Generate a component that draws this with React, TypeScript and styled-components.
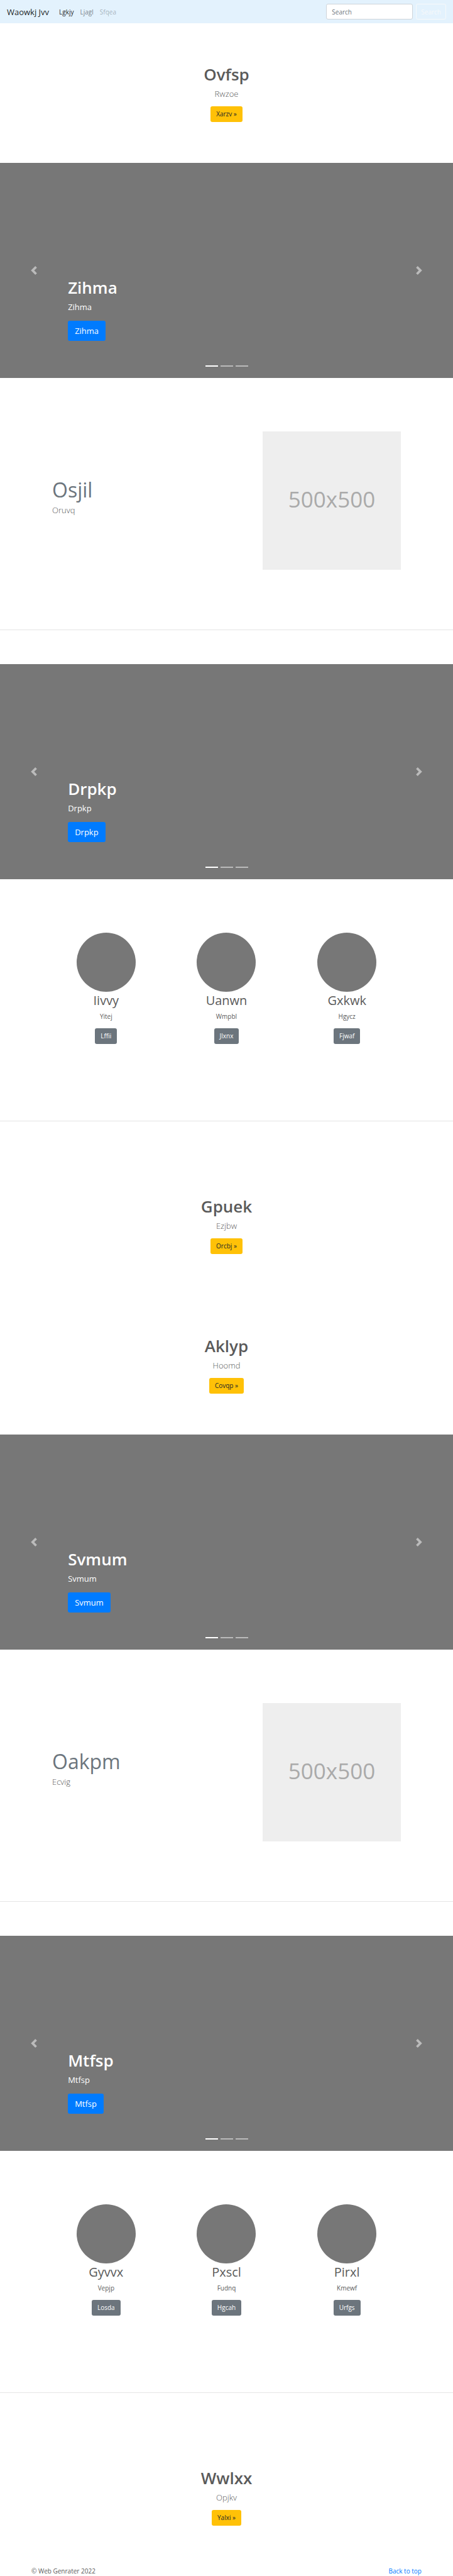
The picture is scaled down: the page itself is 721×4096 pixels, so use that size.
import React from 'react';
import styled, { createGlobalStyle } from 'styled-components';

const GlobalStyle = createGlobalStyle`
  *, *::before, *::after { box-sizing: border-box; }
  body {
    margin: 0;
    background: #fff;
    color: #5a5a5a;
    font-family: "Open Sans", "Noto Sans", sans-serif;
    font-size: 10px;
    line-height: 16px;
  }
  h1, h2, p, ul { margin: 0; padding: 0; }
  a { text-decoration: none; }
  button, input { font-family: inherit; }
`;

const Navbar = styled.nav`
  display: flex;
  align-items: center;
  height: 37px;
  padding: 0 11px;
  background: #e3f2fd;
`;

const Brand = styled.a`
  margin-right: 11px;
  color: rgba(0, 0, 0, 0.9);
  font-size: 13px;
  line-height: 20px;
`;

const NavList = styled.ul`
  display: flex;
  flex: 1;
  list-style: none;
`;

const NavLink = styled.a<{ $tone: number }>`
  display: block;
  padding: 0 5px;
  color: rgba(0, 0, 0, ${(p) => p.$tone});
`;

const SearchForm = styled.form`
  display: flex;
  gap: 5px;
`;

const SearchInput = styled.input`
  width: 138px;
  height: 25px;
  padding: 0 8px;
  border: 1px solid #ced4da;
  border-radius: 3px;
  background: #fff;
  color: #495057;
  font-size: 10px;
  &::placeholder { color: #6c757d; opacity: 1; }
`;

const SearchButton = styled.button`
  height: 25px;
  padding: 0 7px;
  border: 1px solid #f8f9fa;
  border-radius: 3px;
  background: transparent;
  color: #f8f9fa;
  font-size: 10px;
`;

const variants = {
  warning: { background: '#ffc107', color: '#212529' },
  secondary: { background: '#6c757d', color: '#fff' },
  primary: { background: '#007bff', color: '#fff' },
};

const LinkButton = styled.a<{ $variant: keyof typeof variants; $large?: boolean }>`
  display: inline-block;
  height: ${(p) => (p.$large ? 32 : 25)}px;
  padding: 0 ${(p) => (p.$large ? 11 : 9)}px;
  border-radius: 3px;
  background: ${(p) => variants[p.$variant].background};
  color: ${(p) => variants[p.$variant].color};
  font-size: ${(p) => (p.$large ? 13 : 10)}px;
  line-height: ${(p) => (p.$large ? 32 : 25)}px;
`;

const HeroSection = styled.section`
  display: flex;
  flex-direction: column;
  align-items: center;
  padding: 65px 16px;
`;

const Title = styled.h1`
  font-size: 26px;
  font-weight: 600;
  line-height: 32px;
`;

const HeroLead = styled.p`
  margin: 5px 0 10px;
  font-size: 13px;
  font-weight: 300;
  line-height: 20px;
`;

const CarouselSection = styled.section`
  position: relative;
  display: flex;
  flex-direction: column;
  align-items: flex-start;
  justify-content: flex-end;
  min-height: 342px;
  padding: 0 15% 59px;
  background: #777;
  color: #fff;
`;

const CaptionText = styled.p`
  margin: 5px 0 12px;
  font-size: 13px;
  line-height: 20px;
`;

const Control = styled.button<{ $side: 'left' | 'right' }>`
  position: absolute;
  top: 0;
  bottom: 0;
  ${(p) => p.$side}: 0;
  display: flex;
  align-items: center;
  justify-content: center;
  width: 15%;
  padding: 0;
  border: 0;
  background: none;
  color: #fff;
  opacity: 0.5;
`;

const Indicators = styled.div`
  position: absolute;
  right: 0;
  bottom: 18px;
  left: 0;
  display: flex;
  justify-content: center;
  gap: 4px;
`;

const Indicator = styled.button<{ $active?: boolean }>`
  width: 20px;
  height: 2px;
  padding: 0;
  border: 0;
  background: #fff;
  opacity: ${(p) => (p.$active ? 1 : 0.5)};
`;

const FeatureSection = styled.section`
  display: flex;
  align-items: center;
  justify-content: space-between;
  padding: 85px 83px 95px;
`;

const FeatureText = styled.div`
  margin-bottom: 13px;
`;

const FeatureTitle = styled.h2`
  color: #6c757d;
  font-size: 32px;
  font-weight: 400;
  line-height: 40px;
`;

const FeatureLead = styled.p`
  margin-top: 2px;
  font-size: 13px;
  font-weight: 300;
  line-height: 20px;
`;

const Placeholder = styled.div`
  display: flex;
  align-items: center;
  justify-content: center;
  width: 220px;
  height: 220px;
  padding-bottom: 4px;
  background: #eee;
  color: #aaa;
  font-size: 35px;
`;

const Divider = styled.hr`
  height: 1px;
  margin: 0 0 54px;
  border: 0;
  background: rgba(0, 0, 0, 0.1);
`;

const ProfileRow = styled.section`
  display: grid;
  grid-template-columns: repeat(3, 1fr);
  padding: 85px 73px 122px;
`;

const Profile = styled.article`
  display: flex;
  flex-direction: column;
  align-items: center;
`;

const Avatar = styled.div`
  width: 94px;
  height: 94px;
  border-radius: 50%;
  background: #777;
`;

const ProfileName = styled.h2`
  font-size: 20px;
  font-weight: 400;
  line-height: 28px;
`;

const ProfileText = styled.p`
  margin: 3px 0 11px;
`;

const Footer = styled.footer`
  display: flex;
  justify-content: space-between;
  padding: 0 50px;
  line-height: 15px;
`;

const FooterLink = styled.a`
  color: #007bff;
`;

function Hero({ title, lead, action }: { title: string; lead: string; action: string }) {
  return (
    <HeroSection>
      <Title>{title}</Title>
      <HeroLead>{lead}</HeroLead>
      <LinkButton href="#" $variant="warning">{action} »</LinkButton>
    </HeroSection>
  );
}

function Carousel({ label }: { label: string }) {
  return (
    <CarouselSection>
      <Title>{label}</Title>
      <CaptionText>{label}</CaptionText>
      <LinkButton href="#" $variant="primary" $large>{label}</LinkButton>
      <Control type="button" $side="left" aria-label="Previous">
        <svg width="14" height="14" viewBox="0 0 8 8" fill="currentColor">
          <path d="M5.25 0l-4 4 4 4 1.5-1.5-2.5-2.5 2.5-2.5-1.5-1.5z" />
        </svg>
      </Control>
      <Control type="button" $side="right" aria-label="Next">
        <svg width="14" height="14" viewBox="0 0 8 8" fill="currentColor">
          <path d="M2.75 0l-1.5 1.5 2.5 2.5-2.5 2.5 1.5 1.5 4-4-4-4z" />
        </svg>
      </Control>
      <Indicators>
        <Indicator type="button" aria-label="Slide 1" $active />
        <Indicator type="button" aria-label="Slide 2" />
        <Indicator type="button" aria-label="Slide 3" />
      </Indicators>
    </CarouselSection>
  );
}

function Feature({ title, lead }: { title: string; lead: string }) {
  return (
    <>
      <FeatureSection>
        <FeatureText>
          <FeatureTitle>{title}</FeatureTitle>
          <FeatureLead>{lead}</FeatureLead>
        </FeatureText>
        <Placeholder>500x500</Placeholder>
      </FeatureSection>
      <Divider />
    </>
  );
}

type Person = { name: string; text: string; action: string };

function Profiles({ people }: { people: Person[] }) {
  return (
    <>
      <ProfileRow>
        {people.map((person) => (
          <Profile key={person.name}>
            <Avatar />
            <ProfileName>{person.name}</ProfileName>
            <ProfileText>{person.text}</ProfileText>
            <LinkButton href="#" $variant="secondary">{person.action}</LinkButton>
          </Profile>
        ))}
      </ProfileRow>
      <Divider />
    </>
  );
}

const firstPeople: Person[] = [
  { name: 'Iivvy', text: 'Yitej', action: 'Lffii' },
  { name: 'Uanwn', text: 'Wmpbl', action: 'Jlxnx' },
  { name: 'Gxkwk', text: 'Hgycz', action: 'Fjwaf' },
];

const secondPeople: Person[] = [
  { name: 'Gyvvx', text: 'Vepjp', action: 'Losda' },
  { name: 'Pxscl', text: 'Fudnq', action: 'Hgcah' },
  { name: 'Pirxl', text: 'Kmewf', action: 'Urfgs' },
];

export default function App() {
  return (
    <>
      <GlobalStyle />
      <Navbar>
        <Brand href="#">Waowkj Jvv</Brand>
        <NavList>
          <li><NavLink href="#" $tone={0.9}>Lgkjy</NavLink></li>
          <li><NavLink href="#" $tone={0.5}>Ljagl</NavLink></li>
          <li><NavLink href="#" $tone={0.3}>Sfqea</NavLink></li>
        </NavList>
        <SearchForm>
          <SearchInput type="search" placeholder="Search" aria-label="Search" />
          <SearchButton type="button">Search</SearchButton>
        </SearchForm>
      </Navbar>
      <main>
        <Hero title="Ovfsp" lead="Rwzoe" action="Xarzv" />
        <Carousel label="Zihma" />
        <Feature title="Osjil" lead="Oruvq" />
        <Carousel label="Drpkp" />
        <Profiles people={firstPeople} />
        <Hero title="Gpuek" lead="Ezjbw" action="Orcbj" />
        <Hero title="Aklyp" lead="Hoomd" action="Covqp" />
        <Carousel label="Svmum" />
        <Feature title="Oakpm" lead="Ecvig" />
        <Carousel label="Mtfsp" />
        <Profiles people={secondPeople} />
        <Hero title="Wwlxx" lead="Opjkv" action="Yalxi" />
      </main>
      <Footer>
        <p>© Web Genrater 2022</p>
        <FooterLink href="#">Back to top</FooterLink>
      </Footer>
    </>
  );
}
